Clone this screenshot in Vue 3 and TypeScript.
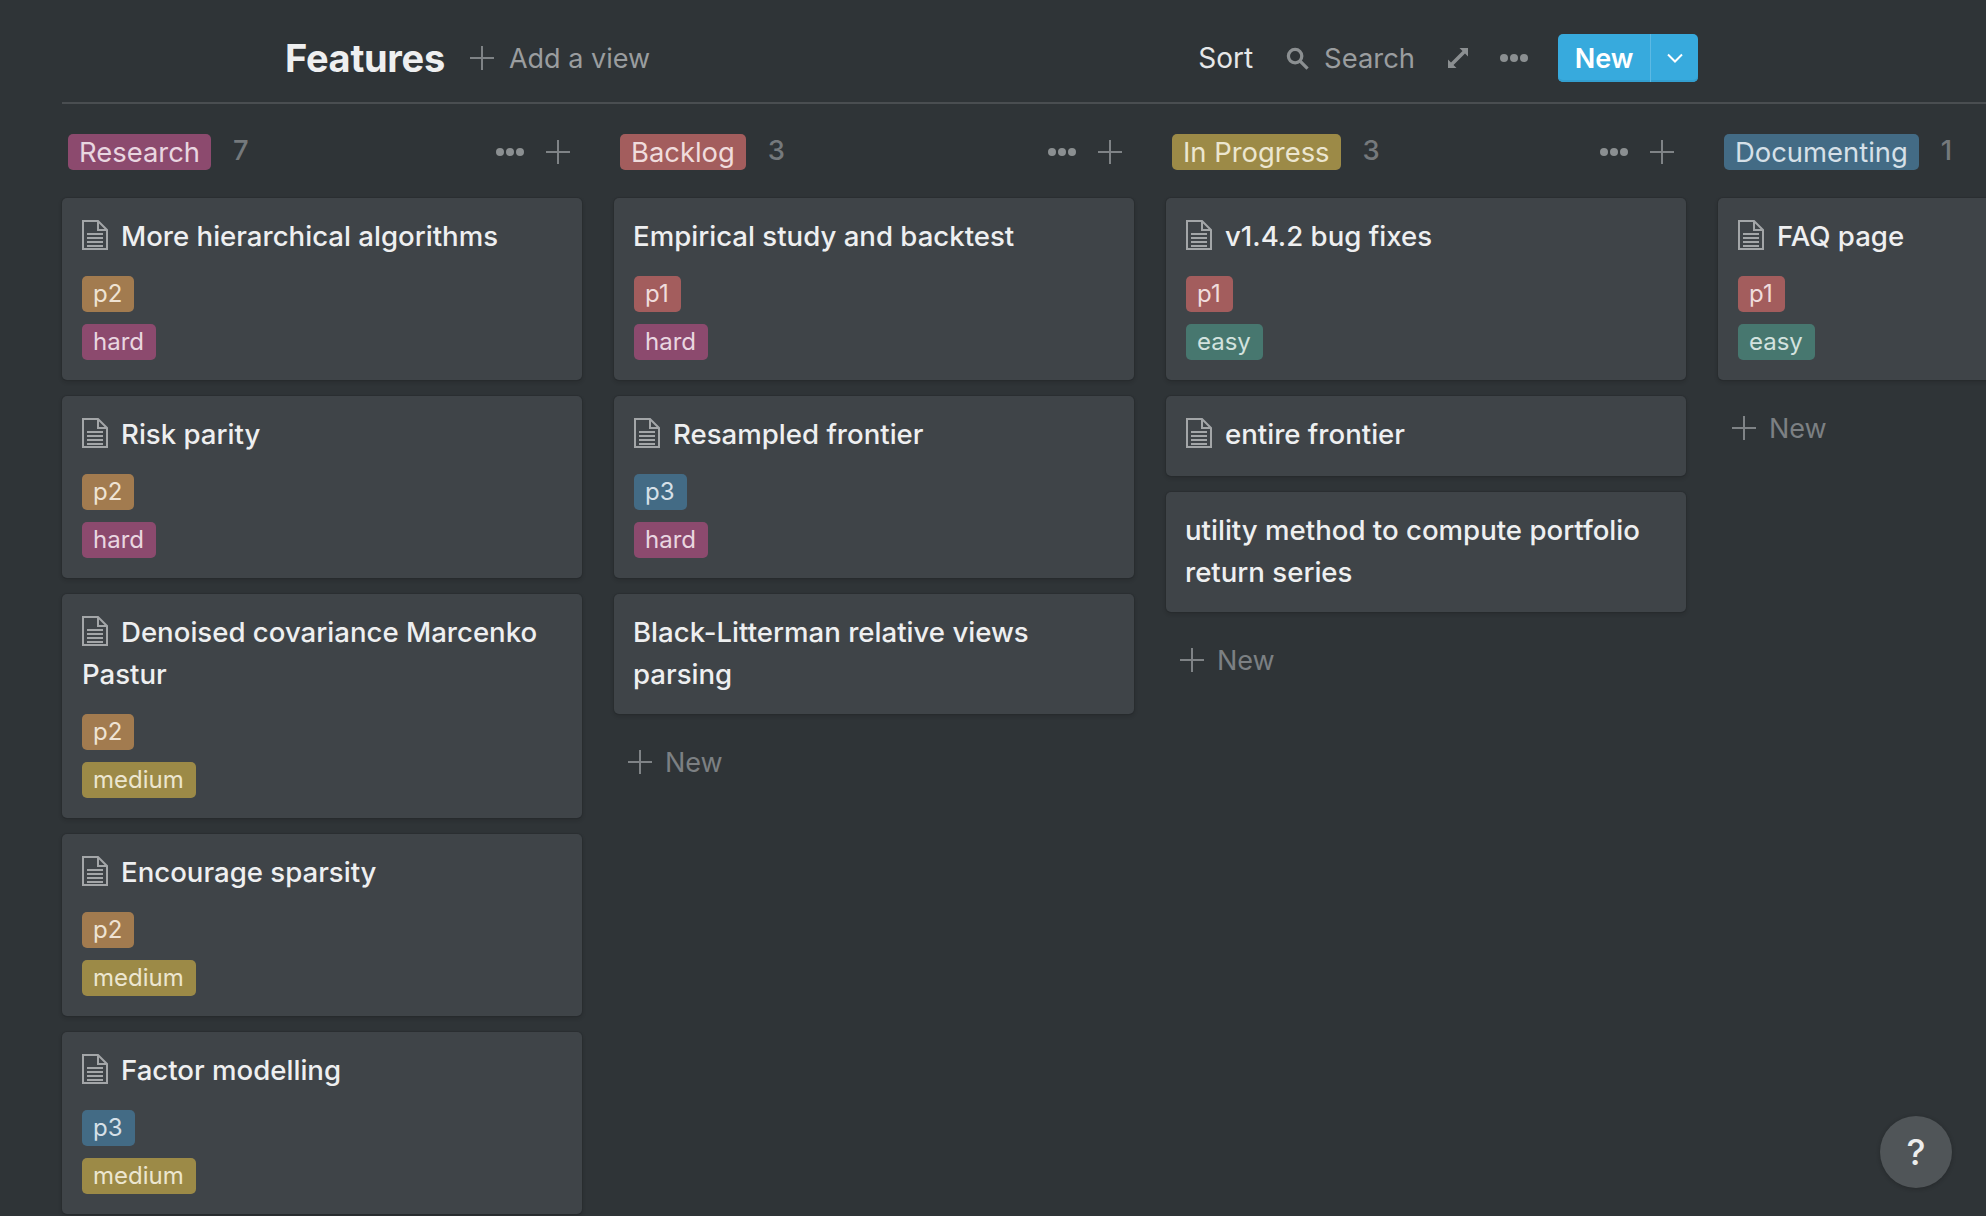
<template>
  <div class="page">
    <header class="topbar">
      <h1 class="title">Features</h1>
      <div class="add-view">
        <svg class="plus" viewBox="0 0 24 24"><path d="M12 0v24M0 12h24" /></svg>
        <span>Add a view</span>
      </div>
      <div class="actions">
        <span class="sort">Sort</span>
        <div class="search">
          <svg class="search-icon" viewBox="0 0 24 24">
            <circle cx="9.5" cy="9.5" r="7" />
            <path d="M14.5 14.5l8 8" />
          </svg>
          <span>Search</span>
        </div>
        <svg class="expand-icon" viewBox="0 0 20 20">
          <path d="M0 20V11.5L3 14.5L14.5 3L11.5 0H20V8.5L17 5.5L5.5 17L8.5 20Z" />
        </svg>
        <div class="dots dots-top"><i /><i /><i /></div>
        <div class="new-btn">
          <span class="new-label">New</span>
          <span class="new-caret">
            <svg viewBox="0 0 16 10"><path d="M1 1.5l7 7 7-7" /></svg>
          </span>
        </div>
      </div>
    </header>

    <main class="board">
      <section v-for="col in columns" :key="col.name" class="column">
        <div class="col-head">
          <span class="col-tag" :class="col.color">{{ col.name }}</span>
          <span class="col-count">{{ col.count }}</span>
          <div class="col-tools">
            <div class="dots"><i /><i /><i /></div>
            <svg class="plus" viewBox="0 0 24 24"><path d="M12 0v24M0 12h24" /></svg>
          </div>
        </div>

        <article
          v-for="card in col.cards"
          :key="card.title"
          class="card"
          :class="{ plain: !card.doc && !card.tags.length }"
        >
          <div class="card-title" :class="{ bare: !card.doc }">
            <svg v-if="card.doc" class="doc-icon" viewBox="0 0 26 30">
              <path d="M1 1h15l9 9v19H1z" />
              <path d="M16 1v9h9" />
              <path d="M5 14h16M5 18h16M5 22h16M5 26h16" />
            </svg>{{ card.title }}
          </div>
          <div v-if="card.tags.length" class="tags">
            <span v-for="t in card.tags" :key="t" class="tag" :class="tagColors[t]">{{ t }}</span>
          </div>
        </article>

        <div v-if="!col.noNew" class="add-card">
          <svg class="plus" viewBox="0 0 24 24"><path d="M12 0v24M0 12h24" /></svg>
          <span>New</span>
        </div>
      </section>
    </main>

    <button class="help">?</button>
  </div>
</template>

<script setup lang="ts">
interface Card {
  title: string
  doc: boolean
  tags: string[]
}
interface Column {
  name: string
  color: string
  count: number
  cards: Card[]
  noNew?: boolean
}

const tagColors: Record<string, string> = {
  p1: 'red',
  p2: 'orange',
  p3: 'blue',
  easy: 'green',
  medium: 'yellow',
  hard: 'pink',
}

const columns: Column[] = [
  {
    name: 'Research',
    color: 'pink',
    count: 7,
    noNew: true,
    cards: [
      { title: 'More hierarchical algorithms', doc: true, tags: ['p2', 'hard'] },
      { title: 'Risk parity', doc: true, tags: ['p2', 'hard'] },
      { title: 'Denoised covariance Marcenko Pastur', doc: true, tags: ['p2', 'medium'] },
      { title: 'Encourage sparsity', doc: true, tags: ['p2', 'medium'] },
      { title: 'Factor modelling', doc: true, tags: ['p3', 'medium'] },
    ],
  },
  {
    name: 'Backlog',
    color: 'red',
    count: 3,
    cards: [
      { title: 'Empirical study and backtest', doc: false, tags: ['p1', 'hard'] },
      { title: 'Resampled frontier', doc: true, tags: ['p3', 'hard'] },
      { title: 'Black-Litterman relative views parsing', doc: false, tags: [] },
    ],
  },
  {
    name: 'In Progress',
    color: 'yellow',
    count: 3,
    cards: [
      { title: 'v1.4.2 bug fixes', doc: true, tags: ['p1', 'easy'] },
      { title: 'entire frontier', doc: true, tags: [] },
      { title: 'utility method to compute portfolio return series', doc: false, tags: [] },
    ],
  },
  {
    name: 'Documenting',
    color: 'blue',
    count: 1,
    cards: [{ title: 'FAQ page', doc: true, tags: ['p1', 'easy'] }],
  },
]
</script>

<style>
html,
body {
  margin: 0;
  background: #2f3437;
}
</style>

<style scoped>
.page {
  position: relative;
  width: 1986px;
  height: 1216px;
  overflow: hidden;
  background: #2f3437;
  font-family: Inter, "Liberation Sans", sans-serif;
  color: #ebeced;
}
.topbar {
  display: flex;
  align-items: center;
  height: 88px;
  margin-left: 62px;
  padding: 14px 288px 0 223px;
  border-bottom: 2px solid #4a4e51;
}
.title {
  margin: 0 0 1px;
  font-size: 38px;
  font-weight: 700;
  letter-spacing: -0.3px;
  color: #eeeff0;
}
.add-view {
  display: flex;
  align-items: center;
  gap: 15px;
  margin-left: 25px;
  font-size: 27px;
  color: #9a9d9f;
}
.plus {
  width: 24px;
  height: 24px;
  flex: none;
}
.plus path {
  fill: none;
  stroke: #7f8386;
  stroke-width: 2;
}
.actions {
  display: flex;
  align-items: center;
  margin-left: auto;
  font-size: 28px;
}
.sort {
  color: #e6e7e8;
}
.search {
  display: flex;
  align-items: center;
  gap: 15px;
  margin-left: 33px;
  font-size: 27.4px;
  color: #9a9d9f;
}
.search-icon {
  width: 23px;
  height: 23px;
}
.search-icon circle,
.search-icon path {
  fill: none;
  stroke: #8b8f91;
  stroke-width: 3.4;
}
.expand-icon {
  width: 20px;
  height: 20px;
  margin-left: 33px;
  fill: #8b8f91;
}
.dots {
  display: flex;
  gap: 2px;
}
.dots i {
  width: 8px;
  height: 8px;
  border-radius: 50%;
  background: #8b8f91;
}
.dots-top {
  margin-left: 32px;
}
.new-btn {
  display: flex;
  align-items: stretch;
  height: 48px;
  width: 140px;
  margin-left: 30px;
  border-radius: 5px;
  overflow: hidden;
  background: #37aadd;
  box-shadow: inset 0 -2px 0 #339fd0;
  color: #fff;
  font-size: 27px;
  font-weight: 600;
}
.new-label {
  display: flex;
  align-items: center;
  justify-content: center;
  width: 92px;
  border-right: 1px solid #5db9e3;
}
.new-caret {
  flex: 1;
  display: flex;
  align-items: center;
  justify-content: center;
}
.new-caret svg {
  width: 16px;
  height: 10px;
  fill: none;
  stroke: #fff;
  stroke-width: 2;
}
.board {
  display: flex;
  gap: 32px;
  padding: 30px 0 0 62px;
}
.column {
  flex: none;
  width: 520px;
}
.col-head {
  display: flex;
  align-items: center;
  height: 36px;
  padding-left: 6px;
  margin-bottom: 28px;
}
.col-tag {
  height: 36px;
  line-height: 36px;
  padding: 0 11px;
  border-radius: 5px;
  font-size: 27.4px;
  white-space: nowrap;
}
.col-count {
  margin-left: 22px;
  margin-top: -4px;
  font-size: 27.4px;
  font-weight: 500;
  color: #75797c;
}
.col-tools {
  display: flex;
  align-items: center;
  gap: 22px;
  margin-left: auto;
  margin-right: 12px;
}
.card {
  padding: 18px 20px 20px;
  margin-bottom: 16px;
  border-radius: 5px;
  background: #3f4448;
  box-shadow: 0 0 0 1px rgba(15, 15, 15, 0.1), 0 2px 4px rgba(15, 15, 15, 0.2);
}
.card.plain {
  padding-bottom: 18px;
}
.card-title {
  margin: -1px 0 1px;
  font-size: 27.6px;
  font-weight: 500;
  line-height: 42px;
  color: #eeeff0;
}
.card-title.bare {
  margin-left: -1px;
}
.doc-icon {
  display: inline-block;
  width: 26px;
  height: 30px;
  margin-right: 13px;
  vertical-align: -4px;
  fill: none;
  stroke: #a3a6a8;
  stroke-width: 2;
}
.tags {
  display: flex;
  flex-direction: column;
  align-items: flex-start;
  gap: 12px;
  margin-top: 19px;
}
.tag {
  height: 36px;
  line-height: 36px;
  padding: 0 12px 0 11px;
  border-radius: 5px;
  font-size: 24px;
}
.pink {
  background: #8c4a6e;
  color: #e9d6e0;
}
.red {
  background: #a35d5d;
  color: #f0dcdc;
}
.orange {
  background: #a27b4f;
  color: #efe3d3;
}
.yellow {
  background: #9c8a47;
  color: #ece6d0;
}
.blue {
  background: #436b85;
  color: #d6e0e8;
}
.green {
  background: #47776f;
  color: #d2e2de;
}
.add-card {
  display: flex;
  align-items: center;
  gap: 13px;
  height: 32px;
  margin-top: 32px;
  padding-left: 14px;
  font-size: 27px;
  color: #7c8083;
}
.help {
  position: absolute;
  left: 1880px;
  top: 1116px;
  width: 72px;
  height: 72px;
  padding: 0;
  border: none;
  border-radius: 50%;
  background: #505558;
  color: #eceded;
  font-family: Inter, "Liberation Sans", sans-serif;
  font-size: 36px;
  font-weight: 500;
  box-shadow: 0 1px 4px rgba(15, 15, 15, 0.3);
}
</style>
